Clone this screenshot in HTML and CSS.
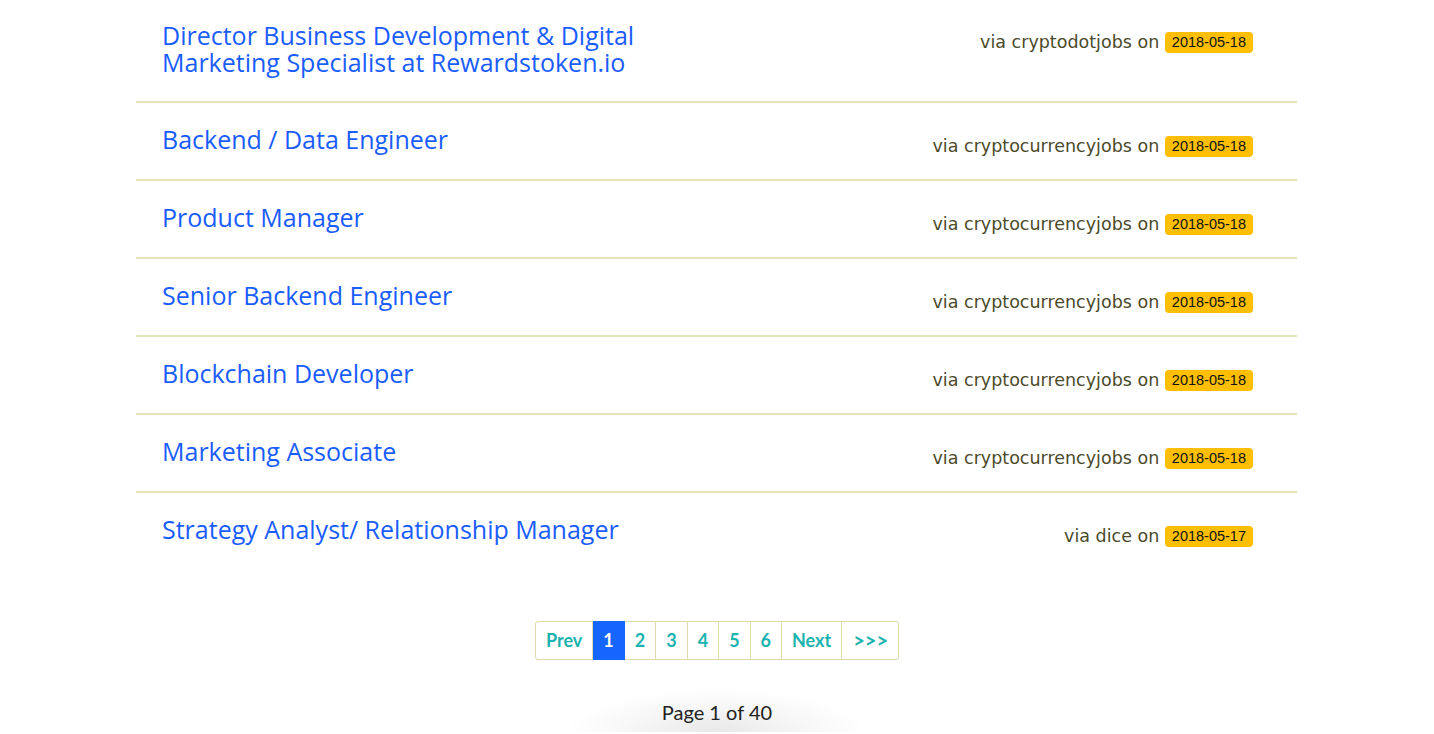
FILE: index.html
```html
<!DOCTYPE html>
<html>
<head>
<meta charset="utf-8">
<link rel="stylesheet" href="styles.css">
</head>
<body>
<div class="list">
  <div class="job first">
    <a class="title" href="#">Director Business Development &amp; Digital<br>Marketing Specialist at Rewardstoken.io</a>
    <div class="meta">via cryptodotjobs on <span class="badge">2018-05-18</span></div>
  </div>
  <div class="job">
    <a class="title" href="#">Backend / Data Engineer</a>
    <div class="meta">via cryptocurrencyjobs on <span class="badge">2018-05-18</span></div>
  </div>
  <div class="job">
    <a class="title" href="#">Product Manager</a>
    <div class="meta">via cryptocurrencyjobs on <span class="badge">2018-05-18</span></div>
  </div>
  <div class="job">
    <a class="title" href="#">Senior Backend Engineer</a>
    <div class="meta">via cryptocurrencyjobs on <span class="badge">2018-05-18</span></div>
  </div>
  <div class="job">
    <a class="title" href="#">Blockchain Developer</a>
    <div class="meta">via cryptocurrencyjobs on <span class="badge">2018-05-18</span></div>
  </div>
  <div class="job">
    <a class="title" href="#">Marketing Associate</a>
    <div class="meta">via cryptocurrencyjobs on <span class="badge">2018-05-18</span></div>
  </div>
  <div class="job last">
    <a class="title" href="#">Strategy Analyst/ Relationship Manager</a>
    <div class="meta">via dice on <span class="badge">2018-05-17</span></div>
  </div>
</div>
<nav class="pager">
  <a class="pg pg-prev" href="#">Prev</a>
  <a class="pg active" href="#">1</a>
  <a class="pg" href="#">2</a>
  <a class="pg" href="#">3</a>
  <a class="pg" href="#">4</a>
  <a class="pg" href="#">5</a>
  <a class="pg" href="#">6</a>
  <a class="pg pg-next" href="#">Next</a>
  <a class="pg pg-last" href="#">&gt;&gt;&gt;</a>
</nav>
<footer class="footer">
  <div class="glow"></div>
  <div class="page-info">Page 1 of 40</div>
</footer>
</body>
</html>
```
FILE: styles.css
```css
html, body {
  margin: 0;
  padding: 0;
  background: #ffffff;
  overflow: hidden;
}
body {
  font-family: "Open Sans", "Noto Sans", sans-serif;
  height: 734px;
}
.list {
  width: 1161px;
  margin-left: 136px;
}
.job {
  display: flex;
  justify-content: space-between;
  align-items: flex-start;
  padding: 23px 44px 26px 26px;
  border-bottom: 2px solid #e4e6b9;
}
.job.first {
  padding-top: 22px;
  padding-bottom: 25px;
}
.job.last {
  border-bottom: none;
}
.title {
  color: #1a5dff;
  text-decoration: none;
  font-size: 25px;
  line-height: 27px;
}
.meta {
  margin-top: 7px;
  margin-bottom: -7px;
  font-family: "DejaVu Sans", "Open Sans", sans-serif;
  font-size: 17.5px;
  line-height: 27px;
  color: #4b4a2a;
  white-space: nowrap;
}
.badge {
  display: inline-block;
  background: #ffbf00;
  color: #111;
  font-family: "Liberation Sans", Arial, sans-serif;
  font-size: 14.5px;
  line-height: 21px;
  padding: 0 7px;
  border-radius: 4px;
  vertical-align: 1px;
}
.pager {
  display: flex;
  justify-content: center;
  margin-top: 52px;
}
.pg {
  display: block;
  height: 37px;
  line-height: 37px;
  padding: 0 10px;
  border: 1px solid #dedcaa;
  border-left: none;
  color: #1bb3ae;
  font-family: "Lato", sans-serif;
  font-weight: bold;
  font-size: 18px;
  text-decoration: none;
  text-align: center;
}
.pg-prev {
  border-left: 1px solid #dedcaa;
  border-radius: 3px 0 0 3px;
}
.pg-last {
  border-radius: 0 3px 3px 0;
  font-size: 20px;
  padding: 0 10px 0 11px;
}
.pg.active {
  background: #1565ff;
  border-color: #1565ff;
  color: #fff;
}
.footer {
  position: relative;
  margin-top: 40px;
  height: 32px;
  display: flex;
  justify-content: center;
}
.glow {
  position: absolute;
  left: 50%;
  bottom: 0;
  width: 300px;
  margin-left: -150px;
  height: 44px;
  background: radial-gradient(ellipse 50% 100% at 50% 100%, rgba(0,0,0,0.09), rgba(0,0,0,0.03) 60%, rgba(0,0,0,0) 100%);
}
.page-info {
  position: relative;
  font-family: "Lato", sans-serif;
  font-size: 20px;
  color: #222;
  line-height: 24px;
}
```
